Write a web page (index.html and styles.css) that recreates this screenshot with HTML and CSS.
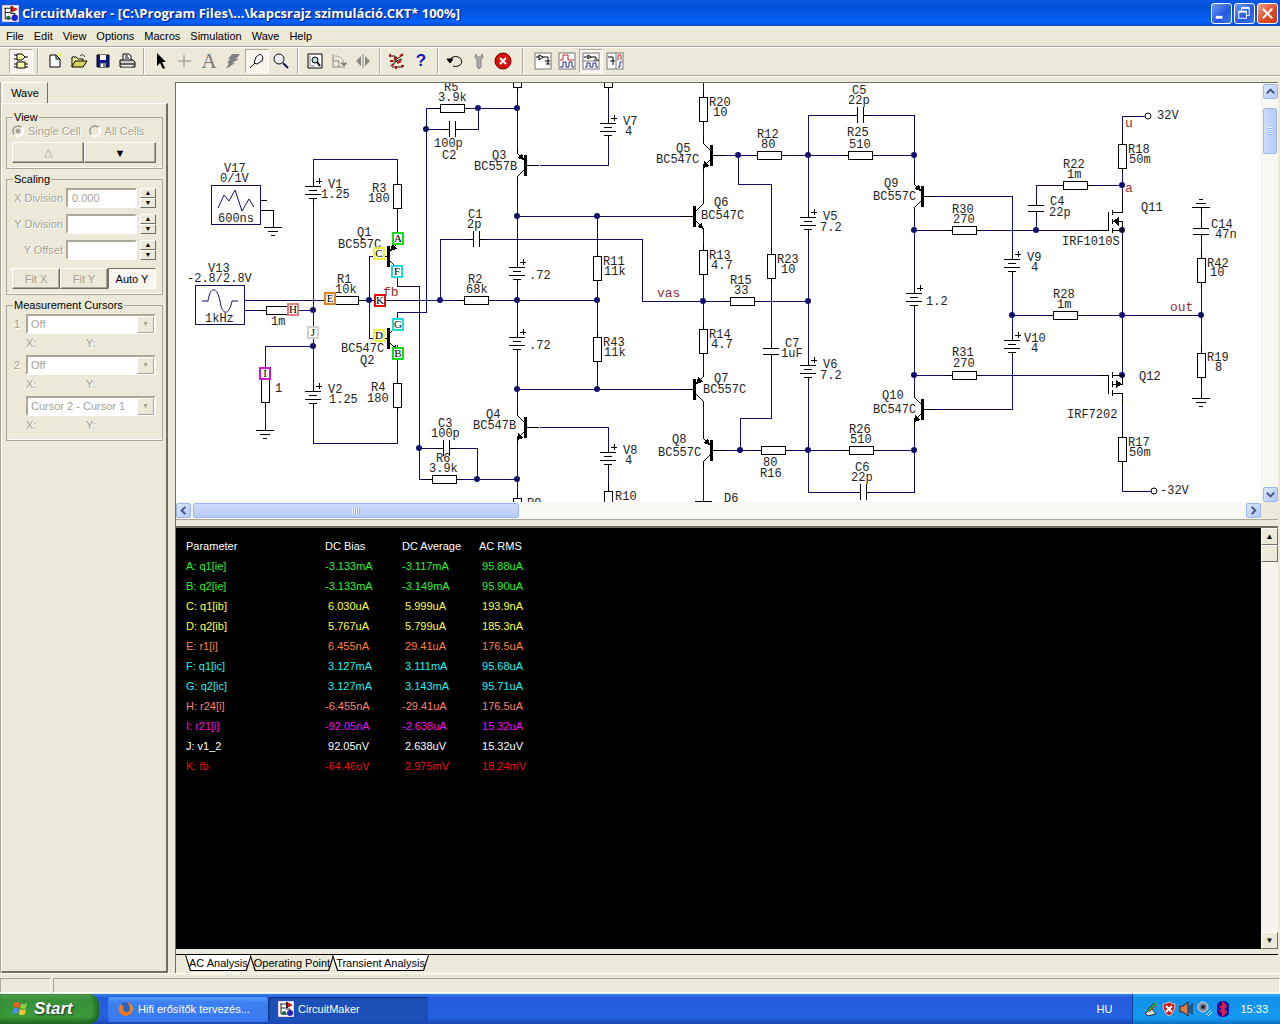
FILE: index.html
```html
<!DOCTYPE html>
<html lang="en">
<head>
  <meta charset="UTF-8" />
  <meta name="viewport" content="width=device-width, initial-scale=1.0" />
  <title>CircuitMaker</title>
  <link rel="stylesheet" href="styles.css">
</head>
<body>
  <svg class="defs" width="0" height="0" aria-hidden="true">
    <defs>
      <!-- schematic parts, all centred on 0,0 -->
      <g id="res-v"><path d="M0-18V18" /><rect x="-4" y="-12" width="8" height="24" /></g>
      <g id="res-h"><path d="M-18 0H18" /><rect x="-12" y="-4" width="24" height="8" /></g>
      <g id="cap-h"><path class="gap" d="M-3 0H3" /><path d="M-10 0H-3M3 0H10M-3-8V8M3-8V8" /></g>
      <g id="cap-v"><path class="gap" d="M0-3V3" /><path d="M0-9V-3M0 3V9M-8-3H8M-8 3H8" /></g>
      <g id="bat">
        <path class="gap" d="M0-6V6" />
        <path d="M0-11V-6M0 6V11M-8-6H8M-4-2H4M-8 2H8M-4 6H4" />
        <path d="M3-11H9M6-14V-8" />
      </g>
      <g id="gnd"><path d="M0-6V0M-9 0H9M-5 4H5M-2 8H2" /></g>
      <!-- column at x=0, base lead to the right -->
      <g id="pnp">
        <path d="M8 0H22M0-18V-12M0 18V12" />
        <path class="slant" d="M0-12L8-4M0 12L8 4" />
        <path class="solid" d="M7-5L0-7L5-12Z" /><rect class="solid" x="7" y="-10" width="3" height="21" />
      </g>
      <g id="npn">
        <path d="M8 0H22M0-18V-12M0 18V12" />
        <path class="slant" d="M0-12L8-4M0 12L8 4" />
        <path class="solid" d="M0 13L1 6L6 11Z" /><rect class="solid" x="7" y="-10" width="3" height="21" />
      </g>
      <g id="cm-logo">
        <rect width="16" height="16" fill="#fff" stroke="#d9a0c8" />
        <path d="M2 3H8M3 3V13H9M3 7H8" fill="none" stroke="#222" stroke-width="1" />
        <rect x="8" y="1" width="2" height="6" fill="#222" /><path d="M10 2L14 4L10 6Z" fill="#d11" stroke="#d11" />
        <circle cx="6" cy="12" r="2" fill="#186a30" /><circle cx="12" cy="12" r="3" fill="#22c" /><path d="M8 8H12V10" fill="none" stroke="#222" />
      </g>
    </defs>
  </svg>

  <header class="titlebar">
    <svg class="logo" viewBox="0 0 16 16"><use href="#cm-logo" /></svg>
    <h1>CircuitMaker - [C:\Program Files\...\kapcsrajz szimuláció.CKT* 100%]</h1>
    <button class="win-btn" aria-label="Minimize"><svg viewBox="0 0 20 20"><path d="M4 14H11" stroke="#fff" stroke-width="3" /></svg></button>
    <button class="win-btn" aria-label="Restore"><svg viewBox="0 0 20 20" fill="none" stroke="#fff"><path d="M7 7V4H15V12H12" stroke-width="1" /><path d="M7 4H15" stroke-width="2" /><rect x="4" y="8" width="8" height="7" /><path d="M4 8H12" stroke-width="2" /></svg></button>
    <button class="win-btn close" aria-label="Close"><svg viewBox="0 0 20 20"><path d="M5 5L15 15M15 5L5 15" stroke="#fff" stroke-width="2" /></svg></button>
  </header>

  <nav class="menubar">
    <a href="#">File</a>
    <a href="#">Edit</a>
    <a href="#">View</a>
    <a href="#">Options</a>
    <a href="#">Macros</a>
    <a href="#">Simulation</a>
    <a href="#">Wave</a>
    <a href="#">Help</a>
  </nav>

  <div class="toolbar">
    <button class="tool pressed" aria-label="Parts"><svg viewBox="0 0 18 18"><path d="M5 2H10L13 5L10 8H5ZM5 10H13V16H5Z" fill="#ffffb0" stroke="#000" /><path d="M2 3H5M2 7H5M13 5H16M2 12H5M2 15H5M13 12H16M13 15H16" stroke="#000" /></svg></button>
    <span class="sep"></span>
    <button class="tool" aria-label="New"><svg viewBox="0 0 18 18"><path d="M4 3H10L14 7V15H4ZM10 3V7H14" fill="#fff" stroke="#000" /><path d="M12 2L15 4M15 1V3" stroke="#ee0" /></svg></button>
    <button class="tool" aria-label="Open"><svg viewBox="0 0 18 18"><path d="M2 15V5H6L8 7H13V9" fill="#ffffa0" stroke="#000" /><path d="M2 15L5 9H17L13 15Z" fill="#d8d860" stroke="#000" /><path d="M10 4Q13 1 15 5" fill="none" stroke="#333" /></svg></button>
    <button class="tool" aria-label="Save"><svg viewBox="0 0 18 18"><path d="M3 3H15V15H3Z" fill="#0a1a8c" stroke="#000" /><rect x="6" y="3" width="6" height="5" fill="#fff" /><rect x="6" y="11" width="6" height="4" fill="#888" /><rect x="7" y="12" width="2" height="3" fill="#fff" /></svg></button>
    <button class="tool" aria-label="Print"><svg viewBox="0 0 18 18"><path d="M5 8V2H11L13 4V8" fill="#fff" stroke="#000" /><path d="M7 4H10M7 6H11" stroke="#000" /><path d="M2 8H15L17 10V15H2Z" fill="#ccc" stroke="#000" /><path d="M2 12H17" stroke="#000" /><path d="M4 14H14" stroke="#fff" /></svg></button>
    <span class="sep"></span>
    <button class="tool" aria-label="Arrow"><svg viewBox="0 0 18 18"><path d="M5 1V14L8 11L11 17L13 16L10 10H14Z" fill="#000" /></svg></button>
    <button class="tool" aria-label="Wire" disabled><svg viewBox="0 0 18 18"><path d="M2 9H15M8 3V15" stroke="#888" /></svg></button>
    <button class="tool letter" aria-label="Text" disabled>A</button>
    <button class="tool" aria-label="Delete" disabled><svg viewBox="0 0 18 18"><path d="M8 2H16L12 7H15L8 11H11L2 17L5 11H3L6 7H4Z" fill="#808080" /></svg></button>
    <button class="tool pressed" aria-label="Probe"><svg viewBox="0 0 18 18"><path d="M2 16L7 11M6 11L8 5L12 2L15 5L14 9L9 12Z" fill="#fff" stroke="#111" /></svg></button>
    <button class="tool" aria-label="Zoom"><svg viewBox="0 0 18 18"><circle cx="7" cy="7" r="5" fill="#eef" stroke="#111" /><path d="M11 11L16 16" stroke="#11117a" stroke-width="2" /></svg></button>
    <span class="sep"></span>
    <button class="tool" aria-label="Fit page"><svg viewBox="0 0 18 18"><path d="M2 2H16V16H2Z" fill="#fff" stroke="#000" stroke-width="1" /><circle cx="9" cy="8" r="3" fill="#bdd" stroke="#000" /><path d="M11 10L14 14" stroke="#000" stroke-width="2" /><path d="M4 4V14H9" fill="none" stroke="#888" /></svg></button>
    <button class="tool" aria-label="Rotate" disabled><svg viewBox="0 0 18 18" fill="none" stroke="#888"><path d="M3 2V15H15M3 9H9V15" /><path d="M5 4Q13 4 14 12" stroke-dasharray="2 1" /><path d="M11 11H17L14 14Z" fill="#888" /></svg></button>
    <button class="tool" aria-label="Mirror" disabled><svg viewBox="0 0 18 18"><path d="M7 4V14L2 9ZM11 4V14L16 9Z" fill="#888" /><path d="M9 2V16" stroke="#888" /></svg></button>
    <span class="sep"></span>
    <button class="tool" aria-label="Trace"><svg viewBox="0 0 18 18" fill="none"><path d="M3 4H7V8L15 3M3 9H8L14 7M4 13L9 9M4 15H15" stroke="#111" /><path d="M2 2V5M2 9H5M6 7L9 5M12 4L15 2M3 14L6 12M9 11L13 9M8 14V17M13 14H16" stroke="#c01010" stroke-width="2" /></svg></button>
    <button class="tool help" aria-label="Help">?</button>
    <span class="sep"></span>
    <button class="tool" aria-label="Reset"><svg viewBox="0 0 18 18" fill="none" stroke="#000"><path d="M4 8A6 5 0 1 1 7 14" /><path d="M1 7H7L4 11Z" fill="#000" /></svg></button>
    <button class="tool" aria-label="Step" disabled><svg viewBox="0 0 18 18"><path d="M6 2L5 5L7 8V15L9 17L11 15V8L13 5L12 2L11 5H7Z" fill="#aaa" stroke="#888" /></svg></button>
    <button class="tool" aria-label="Stop"><svg viewBox="0 0 18 18"><circle cx="9" cy="9" r="8" fill="#d81010" stroke="#700" /><path d="M6 6L12 12M12 6L6 12" stroke="#fff" stroke-width="2" /></svg></button>
    <span class="sep"></span>
    <button class="tool" aria-label="Schematic view"><svg viewBox="0 0 18 18" fill="none" stroke="#000"><rect x="1" y="1" width="16" height="16" fill="#fff" stroke="#777" /><path d="M2 5H5M5 3V8L9 5ZM9 5H14V12M11 9H16M12 12H16" /></svg></button>
    <button class="tool" aria-label="Wave view"><svg viewBox="0 0 18 18" fill="none"><rect x="1" y="1" width="16" height="16" fill="#fff" stroke="#777" /><path d="M2 8H5V3H10V8H16" stroke="#c22" /><path d="M2 15H5V10H8V15H11V10H14V15H16" stroke="#228" /></svg></button>
    <button class="tool pressed" aria-label="Split horizontally"><svg viewBox="0 0 18 18" fill="none"><rect x="1" y="1" width="16" height="16" fill="#fff" stroke="#777" /><path d="M2 5H6M6 3V7L9 5ZM9 5H14V7M12 8H17" stroke="#000" /><path d="M1 9H17" stroke="#777" /><path d="M3 15H5V11H8V15H11V11H14V15H16" stroke="#228" /></svg></button>
    <button class="tool" aria-label="Split vertically"><svg viewBox="0 0 18 18" fill="none"><rect x="1" y="1" width="16" height="16" fill="#fff" stroke="#777" /><path d="M10 1V17" stroke="#777" /><path d="M2 5H7V13M4 9H9" stroke="#000" /><path d="M11 8H12V3H15V8" stroke="#c22" /><path d="M12 15H14V10H16" stroke="#228" /></svg></button>
  </div>

  <main class="workspace">
    <aside class="sidebar">
      <button class="side-tab">Wave</button>
      <div class="side-panel">
        <fieldset>
          <legend>View</legend>
          <div class="radios">
            <label><input type="radio" name="cells" checked disabled>Single Cell</label>
            <label><input type="radio" name="cells" disabled>All Cells</label>
          </div>
          <div class="btn-row">
            <button class="btn" disabled>△</button>
            <button class="btn">▼</button>
          </div>
        </fieldset>

        <fieldset class="scaling">
          <legend>Scaling</legend>
          <div class="field">
            <label for="xdiv">X Division</label>
            <input id="xdiv" type="text" value="0.000" disabled>
            <span class="spin"><button aria-label="X up">▲</button><button aria-label="X down">▼</button></span>
          </div>
          <div class="field">
            <label for="ydiv">Y Division</label>
            <input id="ydiv" type="text" disabled>
            <span class="spin"><button aria-label="Y up">▲</button><button aria-label="Y down">▼</button></span>
          </div>
          <div class="field">
            <label for="yoff">Y Offset</label>
            <input id="yoff" type="text" disabled>
            <span class="spin"><button aria-label="Offset up">▲</button><button aria-label="Offset down">▼</button></span>
          </div>
          <div class="btn-row">
            <button class="btn" disabled>Fit X</button>
            <button class="btn" disabled>Fit Y</button>
            <button class="btn on">Auto Y</button>
          </div>
        </fieldset>

        <fieldset class="cursors">
          <legend>Measurement Cursors</legend>
          <div class="cursor">
            <label for="cur1">1</label>
            <span class="select"><select id="cur1" disabled><option>Off</option></select></span>
          </div>
          <div class="xy"><span>X:</span><span>Y:</span></div>
          <div class="cursor">
            <label for="cur2">2</label>
            <span class="select"><select id="cur2" disabled><option>Off</option></select></span>
          </div>
          <div class="xy"><span>X:</span><span>Y:</span></div>
          <div class="cursor">
            <label for="cur3"></label>
            <span class="select"><select id="cur3" aria-label="Cursor difference" disabled><option>Cursor 2 - Cursor 1</option></select></span>
          </div>
          <div class="xy"><span>X:</span><span>Y:</span></div>
        </fieldset>
      </div>
    </aside>

    <section class="views">
      <div class="schematic">
        <svg class="circuit" role="img" aria-label="Amplifier schematic">
          <g transform="translate(-176 -83)">
            <!-- wires -->
            <path class="wire" d="M426 108H517M426 129H478V108M426 108V312H397V322
              M517 83V153M608 83V165H540M440 300V239H642V301H808
              M517 177V415M517 439V500M517 216H690M597 216V389M517 389H690
              M245 300H597M369 256V338M369 256H388M369 338H388M245 310H313
              M313 443V159H397V245M313 443H397V345M313 346H265V426
              M397 268V286H419V479H517M419 448H477V479
              M540 427H608V495
              M703 83V143M703 167V204M703 228V377M703 401V438M703 462V501
              M725 155H914M738 155V184H771V418H740V450M725 450H914
              M808 115V492H914V115H808
              M930 196H1012V409H930M914 230H1108M1036 230V185H1122
              M914 375H1108M1145 116H1122V212M1122 230V375M1122 393V491H1151
              M1012 315H1201M1201 207V398" />
            <path class="gap" d="M914 184V208M914 397V421" />
            <!-- junctions -->
            <g class="dots">
              <circle cx="478" cy="108" r="3" /><circle cx="517" cy="108" r="3" /><circle cx="426" cy="129" r="3" />
              <circle cx="517" cy="216" r="3" /><circle cx="597" cy="216" r="3" /><circle cx="517" cy="300" r="3" />
              <circle cx="597" cy="300" r="3" /><circle cx="517" cy="389" r="3" /><circle cx="597" cy="389" r="3" />
              <circle cx="440" cy="300" r="3" /><circle cx="369" cy="300" r="3" /><circle cx="313" cy="310" r="3" />
              <circle cx="313" cy="346" r="3" /><circle cx="419" cy="448" r="3" /><circle cx="477" cy="479" r="3" />
              <circle cx="517" cy="479" r="3" /><circle cx="703" cy="301" r="3" /><circle cx="808" cy="301" r="3" />
              <circle cx="738" cy="155" r="3" /><circle cx="808" cy="155" r="3" /><circle cx="914" cy="155" r="3" />
              <circle cx="740" cy="450" r="3" /><circle cx="808" cy="450" r="3" /><circle cx="914" cy="450" r="3" />
              <circle cx="914" cy="230" r="3" /><circle cx="914" cy="375" r="3" /><circle cx="1036" cy="230" r="3" />
              <circle cx="1012" cy="315" r="3" /><circle cx="1122" cy="315" r="3" /><circle cx="1201" cy="315" r="3" />
              <circle cx="1122" cy="185" r="3" /><circle cx="1122" cy="230" r="3" /><circle cx="1122" cy="375" r="3" />
            </g>
            <g class="part">
              <!-- resistors -->
              <use href="#res-h" x="452" y="108" /><use href="#res-v" x="397" y="196" /><use href="#res-v" x="397" y="395" />
              <use href="#res-h" x="346" y="300" /><use href="#res-h" x="278" y="310" /><use href="#res-v" x="265" y="390" />
              <use href="#res-h" x="476" y="300" /><use href="#res-h" x="444" y="479" /><use href="#res-v" x="597" y="268" />
              <use href="#res-v" x="597" y="349" /><use href="#res-v" x="517" y="75" /><use href="#res-v" x="608" y="75" />
              <use href="#res-v" x="517" y="510" /><use href="#res-v" x="608" y="503" />
              <use href="#res-v" x="703" y="109" /><use href="#res-v" x="703" y="262" /><use href="#res-v" x="703" y="341" />
              <use href="#res-h" x="742" y="301" /><use href="#res-h" x="769" y="155" /><use href="#res-h" x="860" y="155" />
              <use href="#res-v" x="771" y="266" /><use href="#res-h" x="773" y="450" /><use href="#res-h" x="861" y="450" />
              <use href="#res-h" x="964" y="230" /><use href="#res-h" x="964" y="375" /><use href="#res-h" x="1075" y="185" />
              <use href="#res-h" x="1065" y="315" /><use href="#res-v" x="1122" y="156" /><use href="#res-v" x="1122" y="449" />
              <use href="#res-v" x="1201" y="270" /><use href="#res-v" x="1201" y="365" />
              <!-- capacitors -->
              <use href="#cap-h" x="452" y="129" /><use href="#cap-h" x="476" y="239" /><use href="#cap-h" x="446" y="448" />
              <use href="#cap-h" x="860" y="115" /><use href="#cap-h" x="863" y="492" /><use href="#cap-v" x="771" y="351" />
              <use href="#cap-v" x="1036" y="208" /><use href="#cap-v" x="1201" y="231" />
              <!-- voltage sources -->
              <use href="#bat" x="313" y="192" /><use href="#bat" x="313" y="397" /><use href="#bat" x="608" y="129" />
              <use href="#bat" x="608" y="458" /><use href="#bat" x="517" y="273" /><use href="#bat" x="517" y="343" />
              <use href="#bat" x="808" y="223" /><use href="#bat" x="808" y="371" /><use href="#bat" x="914" y="299" />
              <use href="#bat" x="1012" y="265" /><use href="#bat" x="1012" y="346" />
              <!-- grounds -->
              <use href="#gnd" x="273" y="227" /><use href="#gnd" x="265" y="430" /><use href="#gnd" x="1201" y="398" />
              <use href="#gnd" transform="translate(1201 207) scale(1 -1)" />
              <!-- bipolar transistors -->
              <use href="#pnp" transform="translate(397 256) scale(-1 1)" /><use href="#npn" transform="translate(397 338) scale(-1 1)" />
              <use href="#pnp" x="517" y="165" /><use href="#npn" x="517" y="427" />
              <use href="#npn" x="703" y="155" /><use href="#npn" transform="translate(703 216) scale(-1 1)" />
              <use href="#pnp" transform="translate(703 389) scale(-1 1)" /><use href="#pnp" x="703" y="450" />
              <use href="#pnp" x="914" y="196" /><use href="#npn" x="914" y="409" />
              <path d="M695 501H712" />
              <!-- mosfets -->
              <path d="M1090 230H1108V212M1112 210V215M1112 219V224M1112 228V233M1112 212H1122V200M1112 221H1122V240M1112 230H1122" />
              <path class="solid" d="M1113 221L1119 217V226Z" />
              <path d="M1098 375H1108V394M1112 372V378M1112 381V387M1112 390V396M1112 375H1122V384H1112M1112 393H1122V405" />
              <path class="solid" d="M1122 384L1116 380V388Z" />
              <circle class="pin" cx="1148" cy="116" r="3" /><circle class="pin" cx="1154" cy="491" r="3" />
              <path d="M261 200H267M261 210H273V222" />
            </g>
            <!-- signal generators -->
            <g class="source">
              <rect x="211" y="185" width="49" height="39" /><rect x="195" y="285" width="49" height="39" />
              <path class="slant" d="M218 208L224 195L229 201L235 190L242 211L249 199L254 207" />
              <path class="slant" d="M202 301H208C210 286 217 286 220 301C222 316 229 316 232 301H238" />
            </g>
            <!-- part labels -->
            <g class="labels">
              <text x="224" y="172">V17</text><text x="220" y="182">0/1V</text><text x="218" y="222">600ns</text>
              <text x="208" y="272">V13</text><text x="187" y="282">-2.8/2.8V</text><text x="205" y="322">1kHz</text>
              <text x="328" y="188">V1</text><text x="321" y="198">1.25</text><text x="372" y="192">R3</text><text x="368" y="202">180</text>
              <text x="357" y="236">Q1</text><text x="338" y="248">BC557C</text><text x="337" y="283">R1</text><text x="335" y="293">10k</text>
              <text x="271" y="325">1m</text><text x="341" y="352">BC547C</text><text x="360" y="364">Q2</text><text x="275" y="392">1</text>
              <text x="328" y="393">V2</text><text x="329" y="403">1.25</text><text x="371" y="391">R4</text><text x="367" y="402">180</text>
              <text x="438" y="427">C3</text><text x="431" y="437">100p</text><text x="436" y="462">R6</text><text x="429" y="472">3.9k</text>
              <text x="444" y="91">R5</text><text x="438" y="101">3.9k</text><text x="434" y="147">100p</text><text x="442" y="159">C2</text>
              <text x="492" y="159">Q3</text><text x="474" y="170">BC557B</text><text x="623" y="125">V7</text><text x="625" y="135">4</text>
              <text x="468" y="218">C1</text><text x="467" y="228">2p</text><text x="603" y="265">R11</text><text x="604" y="275">11k</text>
              <text x="529" y="279">.72</text><text x="468" y="283">R2</text><text x="466" y="293">68k</text><text x="529" y="349">.72</text>
              <text x="603" y="346">R43</text><text x="604" y="356">11k</text><text x="486" y="418">Q4</text><text x="473" y="429">BC547B</text>
              <text x="623" y="454">V8</text><text x="625" y="464">4</text><text x="615" y="500">R10</text><text x="527" y="507">R9</text>
              <text x="709" y="106">R20</text><text x="713" y="116">10</text><text x="757" y="138">R12</text><text x="761" y="148">80</text>
              <text x="852" y="94">C5</text><text x="848" y="104">22p</text><text x="847" y="136">R25</text><text x="849" y="148">510</text>
              <text x="676" y="152">Q5</text><text x="656" y="163">BC547C</text><text x="714" y="206">Q6</text><text x="701" y="219">BC547C</text>
              <text x="823" y="220">V5</text><text x="820" y="231">7.2</text><text x="709" y="259">R13</text><text x="711" y="269">4.7</text>
              <text x="777" y="263">R23</text><text x="781" y="273">10</text><text x="730" y="284">R15</text><text x="734" y="294">33</text>
              <text x="884" y="187">Q9</text><text x="873" y="200">BC557C</text><text x="926" y="305">1.2</text>
              <text x="709" y="338">R14</text><text x="711" y="348">4.7</text><text x="785" y="347">C7</text><text x="781" y="357">1uF</text>
              <text x="823" y="368">V6</text><text x="820" y="379">7.2</text><text x="714" y="382">Q7</text><text x="703" y="393">BC557C</text>
              <text x="672" y="443">Q8</text><text x="658" y="456">BC557C</text><text x="763" y="466">80</text><text x="760" y="477">R16</text>
              <text x="849" y="433">R26</text><text x="850" y="443">510</text><text x="855" y="471">C6</text><text x="851" y="481">22p</text>
              <text x="724" y="502">D6</text><text x="882" y="399">Q10</text><text x="873" y="413">BC547C</text>
              <text x="1157" y="119">32V</text><text x="1128" y="153">R18</text><text x="1129" y="163">50m</text>
              <text x="1063" y="168">R22</text><text x="1067" y="178">1m</text><text x="1050" y="205">C4</text><text x="1049" y="216">22p</text>
              <text x="1141" y="211">Q11</text><text x="952" y="213">R30</text><text x="953" y="223">270</text><text x="1062" y="245">IRF1010S</text>
              <text x="1027" y="261">V9</text><text x="1031" y="271">4</text><text x="1211" y="228">C14</text><text x="1215" y="238">47n</text>
              <text x="1207" y="267">R42</text><text x="1210" y="276">10</text><text x="1053" y="298">R28</text><text x="1057" y="308">1m</text>
              <text x="1024" y="342">V10</text><text x="1031" y="352">4</text><text x="952" y="356">R31</text><text x="953" y="367">270</text>
              <text x="1139" y="380">Q12</text><text x="1067" y="418">IRF7202</text><text x="1207" y="361">R19</text><text x="1215" y="371">8</text>
              <text x="1128" y="446">R17</text><text x="1129" y="456">50m</text><text x="1160" y="494">-32V</text>
            </g>
            <g class="nets">
              <text x="383" y="296">fb</text><text x="657" y="297">vas</text><text x="1125" y="127">u</text>
              <text x="1125" y="192">a</text><text x="1170" y="311">out</text>
            </g>
            <!-- probes -->
            <g class="probes">
              <g stroke="#18d818"><rect x="393" y="233" width="10" height="11" /><text x="398" y="242">A</text></g>
              <g stroke="#18d818"><rect x="393" y="348" width="10" height="11" /><text x="398" y="357">B</text></g>
              <g stroke="#f0f040"><rect x="374" y="248" width="10" height="11" /><text x="379" y="257">C</text></g>
              <g stroke="#f0f040"><rect x="374" y="330" width="10" height="11" /><text x="379" y="339">D</text></g>
              <g stroke="#e08018"><rect x="325" y="293" width="10" height="11" /><text x="330" y="302">E</text></g>
              <g stroke="#20d8d8"><rect x="392" y="266" width="10" height="11" /><text x="397" y="275">F</text></g>
              <g stroke="#20d8d8"><rect x="393" y="319" width="10" height="11" /><text x="398" y="328">G</text></g>
              <g stroke="#e08080"><rect x="288" y="304" width="10" height="11" /><text x="293" y="313">H</text></g>
              <g stroke="#d018d0"><rect x="260" y="368" width="10" height="11" /><text x="265" y="377">I</text></g>
              <g stroke="#d0d0d0"><rect x="308" y="327" width="10" height="11" /><text x="313" y="336">J</text></g>
              <g stroke="#e01010"><rect x="375" y="295" width="10" height="11" /><text x="380" y="304">K</text></g>
            </g>
          </g>
        </svg>
        <div class="vscroll">
          <button class="sb" aria-label="Scroll up"><svg viewBox="0 0 14 14"><path d="M3 9L7 5L11 9" /></svg></button>
          <div class="thumb v"></div>
          <button class="sb" aria-label="Scroll down"><svg viewBox="0 0 14 14"><path d="M3 5L7 9L11 5" /></svg></button>
        </div>
        <div class="hscroll">
          <button class="sb" aria-label="Scroll left"><svg viewBox="0 0 14 14"><path d="M9 3L5 7L9 11" /></svg></button>
          <div class="thumb h"></div>
          <button class="sb" aria-label="Scroll right"><svg viewBox="0 0 14 14"><path d="M5 3L9 7L5 11" /></svg></button>
        </div>
      </div>

      <div class="splitter"></div>

      <div class="results">
        <div class="readout">
          <table>
            <thead>
              <tr><th>Parameter</th><th>DC Bias</th><th>DC Average</th><th>AC RMS</th></tr>
            </thead>
            <tbody>
              <tr class="green"><td>A: q1[ie]</td><td>-3.133mA</td><td>-3.117mA</td><td>&nbsp;95.88uA</td></tr>
              <tr class="green"><td>B: q2[ie]</td><td>-3.133mA</td><td>-3.149mA</td><td>&nbsp;95.90uA</td></tr>
              <tr class="yellow"><td>C: q1[ib]</td><td>&nbsp;6.030uA</td><td>&nbsp;5.999uA</td><td>&nbsp;193.9nA</td></tr>
              <tr class="yellow"><td>D: q2[ib]</td><td>&nbsp;5.767uA</td><td>&nbsp;5.799uA</td><td>&nbsp;185.3nA</td></tr>
              <tr class="orange"><td>E: r1[i]</td><td>&nbsp;6.455nA</td><td>&nbsp;29.41uA</td><td>&nbsp;176.5uA</td></tr>
              <tr class="cyan"><td>F: q1[ic]</td><td>&nbsp;3.127mA</td><td>&nbsp;3.111mA</td><td>&nbsp;95.68uA</td></tr>
              <tr class="cyan"><td>G: q2[ic]</td><td>&nbsp;3.127mA</td><td>&nbsp;3.143mA</td><td>&nbsp;95.71uA</td></tr>
              <tr class="salmon"><td>H: r24[i]</td><td>-6.455nA</td><td>-29.41uA</td><td>&nbsp;176.5uA</td></tr>
              <tr class="magenta"><td>I: r21[i]</td><td>-92.05nA</td><td>-2.638uA</td><td>&nbsp;15.32uA</td></tr>
              <tr class="white"><td>J: v1_2</td><td>&nbsp;92.05nV</td><td>&nbsp;2.638uV</td><td>&nbsp;15.32uV</td></tr>
              <tr class="red"><td>K: fb</td><td>-64.46uV</td><td>&nbsp;2.975mV</td><td>&nbsp;18.24mV</td></tr>
            </tbody>
          </table>
          <div class="classic-scroll">
            <button class="cb" aria-label="Up">▲</button>
            <div class="cb grip"></div>
            <button class="cb last" aria-label="Down">▼</button>
          </div>
        </div>
        <div class="analysis-tabs">
          <button>AC Analysis</button>
          <button class="active">Operating Point</button>
          <button>Transient Analysis</button>
        </div>
      </div>
    </section>
  </main>

  <div class="statusbar"><span></span><span></span></div>

  <footer class="taskbar">
    <button class="start">
      <svg viewBox="0 0 20 20"><path d="M4 4Q7 2 10 4L9 9Q6 7 3 9Z" fill="#f05a22" /><path d="M11 5Q14 6 17 4L16 9Q13 11 10 9Z" fill="#8ccf3c" /><path d="M3 10Q6 8 9 10L8 15Q5 13 2 15Z" fill="#4a8cf5" /><path d="M10 10Q13 12 16 10L15 15Q12 17 9 15Z" fill="#fcc82a" /></svg>
      Start
    </button>
    <button class="task">
      <svg viewBox="0 0 16 16"><circle cx="8" cy="8" r="7" fill="#2a60c8" /><path d="M9 1A7 7 0 1 1 1 6Q2 4 3 3Q4 5 6 5Q4 8 7 11Q11 12 12 8Q12 4 9 1Z" fill="#f07818" /><path d="M13 4Q16 8 13 12Q15 6 11 3Z" fill="#fcc030" /></svg>
      Hifi erősítők tervezés...
    </button>
    <button class="task current">
      <svg viewBox="0 0 16 16"><use href="#cm-logo" /></svg>
      CircuitMaker
    </button>
    <span class="lang">HU</span>
    <div class="tray">
      <svg viewBox="0 0 16 16"><path d="M2 12L9 8L13 13L5 15Z" fill="#ddd" stroke="#222" /><path d="M5 10L13 2" stroke="#22a822" stroke-width="3" /><path d="M6 11L13 4" stroke="#d22" /><path d="M4 9L11 2" stroke="#228" /></svg>
      <svg viewBox="0 0 16 16"><path d="M8 1Q11 3 14 3Q14 12 8 15Q2 12 2 3Q5 3 8 1Z" fill="#d01818" stroke="#e8c0c0" /><path d="M5 5L11 11M11 5L5 11" stroke="#fff" stroke-width="2" /></svg>
      <svg viewBox="0 0 16 16"><path d="M1 5H4L9 1V15L4 11H1Z" fill="#e07840" stroke="#222" /><path d="M11 4V12M13 2V14" stroke="#222" stroke-width="1" /></svg>
      <svg viewBox="0 0 16 16"><circle cx="6" cy="6" r="5" fill="#889" stroke="#cde" /><circle cx="6" cy="6" r="2" fill="#223" /><path d="M9 14L14 9M11 15L15 11" stroke="#cde" /></svg>
      <svg viewBox="0 0 16 16"><rect x="2" y="0" width="12" height="16" rx="5" fill="#1010b0" /><path d="M5 5L11 11L8 14V2L11 5L5 11" fill="none" stroke="#e02040" stroke-width="2" /></svg>
      <time>15:33</time>
    </div>
  </footer>
</body>
</html>
```
FILE: styles.css
```css
:root {
  --face: #ece9d8;
  --shade: #aca899;
  --dark: #716f64;
  --disabled: #a5a294;
  --wire: #10106c;
}
* { box-sizing: border-box; margin: 0; padding: 0; }
body {
  height: 100vh;
  display: flex;
  flex-direction: column;
  overflow: hidden;
  background: var(--face);
  font-family: 'Liberation Sans', Arial, sans-serif;
  font-size: 11px;
  color: #000;
}
button, input, select { font: inherit; color: inherit; }
.defs { position: absolute; }

/* title bar */
.titlebar {
  flex: none;
  height: 26px;
  display: flex;
  align-items: center;
  gap: 2px;
  padding: 0 2px;
  background: linear-gradient(#0a58e8, #0450d8 20%, #0458ea 60%, #0462fa 85%, #0346c4);
  color: #fff;
}
.logo { width: 17px; height: 17px; }
.titlebar h1 {
  flex: 1;
  margin-left: 1px;
  font: 700 13px 'Open Sans', sans-serif;
  white-space: nowrap;
  text-shadow: 1px 1px 1px #0a1883;
}
.win-btn {
  width: 21px;
  height: 21px;
  border: 1px solid #fff;
  border-radius: 3px;
  background: linear-gradient(135deg, #6c96f4, #2458dc 60%, #3c78f0);
}
.win-btn svg { display: block; width: 19px; height: 19px; }
.win-btn.close { background: linear-gradient(135deg, #f0a088, #dc4820 60%, #c83c10); }

/* menu and toolbar */
.menubar {
  flex: none;
  height: 20px;
  display: flex;
  align-items: center;
  gap: 10px;
  padding: 0 6px;
}
.menubar a { color: #000; text-decoration: none; }
.toolbar {
  flex: none;
  height: 30px;
  display: flex;
  align-items: center;
  padding: 0 9px;
  border-top: 1px solid var(--shade);
  border-bottom: 1px solid var(--shade);
  box-shadow: inset 0 1px #fff, 0 1px #fff;
}
.tool {
  width: 24px;
  height: 24px;
  border: 1px solid transparent;
  background: none;
}
.tool svg { display: block; width: 18px; height: 18px; margin: auto; }
.tool.pressed {
  background: #f7f5ee;
  border-color: var(--shade) #fff #fff var(--shade);
}
.tool.letter { font: 21px 'Liberation Serif', serif; line-height: 20px; color: #777; }
.tool.help { font-size: 17px; font-weight: bold; line-height: 20px; color: #1414b4; }
.sep {
  width: 2px;
  height: 26px;
  margin: 0 4px;
  border-left: 1px solid var(--shade);
  border-right: 1px solid #fff;
}
.sep:last-of-type { margin: 0 7px; }

/* workspace */
.workspace {
  flex: 1;
  min-height: 0;
  display: flex;
  margin-top: 6px;
}
.sidebar {
  width: 168px;
  flex: none;
  display: flex;
  flex-direction: column;
  border-left: 1px solid var(--shade);
}
.side-tab {
  width: 46px;
  height: 21px;
  margin-left: 1px;
  border: 1px solid #fff;
  border-right-color: var(--dark);
  border-bottom: 0;
  background: var(--face);
}
.side-panel {
  flex: 1;
  padding: 6px 3px 0 4px;
  border-top: 1px solid #fff;
  border-left: 1px solid #fff;
  border-right: 2px solid var(--dark);
  border-bottom: 2px solid var(--dark);
}
fieldset {
  padding: 0 6px 5px 5px;
  margin-bottom: 3px;
  border: 1px solid var(--shade);
  box-shadow: inset 0 -1px #fff;
}
legend {
  height: 14px;
  line-height: 14px;
  margin-left: 1px;
  padding: 0 1px;
}
.radios {
  display: flex;
  gap: 8px;
  margin-bottom: 4px;
  white-space: nowrap;
}
.radios label { display: flex; align-items: center; gap: 4px; height: 14px; }
.radios input {
  appearance: none;
  width: 12px;
  height: 12px;
  border: 2px solid;
  border-color: var(--shade) #fff #fff var(--shade);
  border-radius: 50%;
}
.radios input:checked { background: radial-gradient(circle, var(--shade) 2px, transparent 3px); }
.radios label, .field label, .cursor label, .xy { color: var(--disabled); text-shadow: 1px 1px #fff; }
.btn-row { display: flex; }
.btn {
  flex: 1;
  height: 21px;
  border: 1px solid;
  border-color: #fff var(--dark) var(--dark) #fff;
  box-shadow: inset -1px -1px var(--shade);
  background: var(--face);
  white-space: nowrap;
}
.btn:disabled { color: var(--disabled); }
.btn.on {
  background: #f7f5ee;
  border-color: var(--dark) #fff #fff var(--dark);
  box-shadow: none;
}
.field {
  display: flex;
  align-items: center;
  gap: 3px;
  height: 20px;
  margin-bottom: 6px;
}
.field label { flex: 1; text-align: right; white-space: nowrap; }
.field input {
  width: 71px;
  height: 20px;
  padding: 0 4px;
  border: 2px solid;
  border-color: var(--shade) #fff #fff var(--shade);
  background: #fff;
  color: var(--disabled);
}
.scaling legend { margin-bottom: 2px; }
.scaling .btn-row { padding-top: 2px; }
.spin { display: flex; flex-direction: column; width: 16px; }
.spin button {
  height: 10px;
  border: 1px solid;
  border-color: #fff var(--dark) var(--dark) #fff;
  background: var(--face);
  font-size: 7px;
  line-height: 8px;
}
.cursors { padding-bottom: 3px; }
.cursors legend { margin-bottom: 2px; }
.cursor { display: flex; align-items: center; }
.cursor label { width: 14px; padding-left: 2px; }
.select { position: relative; flex: 1; display: flex; }
.select::after {
  content: "▼";
  position: absolute;
  top: 2px;
  right: 2px;
  width: 15px;
  height: 15px;
  border: 1px solid;
  border-color: #fff var(--shade) var(--shade) #fff;
  background: var(--face);
  color: var(--disabled);
  font-size: 7px;
  line-height: 13px;
  text-align: center;
}
.cursor select {
  appearance: none;
  width: 100%;
  height: 20px;
  padding: 0 3px;
  border: 2px solid;
  border-color: var(--shade) #fff #fff var(--shade);
  border-radius: 0;
  background: #fff;
  color: var(--disabled);
  opacity: 1;
}
.xy { display: flex; height: 21px; line-height: 19px; padding-left: 14px; }
.xy span { width: 60px; }

/* right side views */
.views {
  flex: 1;
  min-width: 0;
  margin-left: 7px;
  margin-right: 2px;
  display: grid;
  grid-template-rows: minmax(0, 437fr) 9px minmax(0, 445fr);
  border-left: 1px solid var(--dark);
}
.schematic {
  display: grid;
  grid-template-columns: minmax(0, 1fr) 17px;
  grid-template-rows: minmax(0, 1fr) 17px;
  border-top: 1px solid var(--dark);
}
.circuit { width: 100%; height: 100%; background: #fff; overflow: hidden; }
.wire { fill: none; stroke: var(--wire); shape-rendering: crispEdges; }
.dots { fill: var(--wire); }
.part, .source, #res-v, #res-h { shape-rendering: crispEdges; }
.part { fill: none; stroke: #000; }
.part .pin, #res-v rect, #res-h rect { fill: #fff; }
.part .pin { shape-rendering: auto; }
.gap { stroke: #fff; stroke-width: 1; shape-rendering: crispEdges; }
.slant { fill: none; shape-rendering: auto; }
.solid { fill: #000; stroke: none; }
.source { fill: none; stroke: var(--wire); }
.labels { font: 12px 'Liberation Mono', monospace; fill: #222; }
.nets { font: 13px 'Liberation Mono', monospace; fill: #983030; }
.probes rect { fill: #fff; stroke-width: 2; }
.probes text {
  font: 11px 'Liberation Serif', serif;
  fill: #000;
  stroke: none;
  text-anchor: middle;
}
.vscroll, .hscroll { display: flex; background: #f8f8f2; }
.vscroll { flex-direction: column; padding: 1px 1px 0; border-left: 1px solid #f0efe4; }
.hscroll { padding: 1px 0; }
.sb {
  flex: none;
  width: 15px;
  height: 15px;
  border: 1px solid #9db5ee;
  border-radius: 2px;
  background: linear-gradient(135deg, #dce6fe, #b4c8f6);
}
.sb:last-child { margin-left: auto; }
.vscroll .sb:last-child { margin-left: 0; margin-top: auto; }
.sb svg { display: block; width: 13px; height: 13px; fill: none; stroke: #3c5488; stroke-width: 2; }
.thumb {
  border: 1px solid #9db5ee;
  border-radius: 2px;
  background: linear-gradient(90deg, #cddbfc, #b8ccf8);
}
.thumb::before { content: ""; display: block; background: repeating-linear-gradient(#eef4fe 0 1px, #8cb0f8 1px 2px); }
.thumb.v { height: 46px; margin-top: 9px; padding: 18px 4px; }
.thumb.v::before { height: 8px; }
.thumb.h {
  width: 30%;
  margin-left: 2px;
  display: flex;
  align-items: center;
  justify-content: center;
  background: linear-gradient(#cddbfc, #b8ccf8);
}
.thumb.h::before { width: 8px; height: 6px; background: repeating-linear-gradient(90deg, #eef4fe 0 1px, #8cb0f8 1px 2px); }
.splitter { border-top: 1px solid var(--shade); border-bottom: 2px solid var(--dark); background: var(--face); }

/* operating point readout */
.results { display: flex; flex-direction: column; min-height: 0; }
.readout {
  flex: 1;
  min-height: 0;
  display: flex;
  justify-content: space-between;
  background: #000;
}
table {
  align-self: flex-start;
  margin: 8px 0 0 10px;
  border-collapse: collapse;
  table-layout: fixed;
  width: 370px;
}
th, td { height: 20px; text-align: left; font-weight: normal; white-space: nowrap; }
th { color: #fff; width: 77px; }
th:first-child { width: 139px; }
.green { color: #30f030; }
.yellow { color: #ffff40; }
.orange { color: #ff8040; }
.cyan { color: #20f0f0; }
.salmon { color: #ff8070; }
.magenta { color: #f010f0; }
.white { color: #fff; }
.red { color: #f01010; }
.classic-scroll { width: 17px; display: flex; flex-direction: column; background: #f6f4ec; }
.cb {
  height: 17px;
  border: 1px solid;
  border-color: #fff var(--dark) var(--dark) #fff;
  background: var(--face);
  font-size: 8px;
  line-height: 14px;
}
.cb.last { margin-top: auto; }
.analysis-tabs {
  flex: none;
  height: 24px;
  display: flex;
  padding: 6px 0 0 9px;
  background: linear-gradient(var(--face) 5px, #000 5px 6px, var(--face) 6px);
}
.analysis-tabs button {
  height: 16px;
  padding: 0 4px;
  border: 0;
  background: #000;
  clip-path: polygon(0 0, 100% 0, calc(100% - 5px) 100%, 5px 100%);
  position: relative;
  z-index: 0;
  margin-right: -2px;
  line-height: 14px;
}
.analysis-tabs button::before {
  content: "";
  position: absolute;
  inset: 0 0 1px;
  z-index: -1;
  background: #fff;
  clip-path: polygon(1px 0, calc(100% - 1px) 0, calc(100% - 6px) 100%, 6px 100%);
}
.analysis-tabs .active::before { background: var(--face); }

/* status bar */
.statusbar {
  flex: none;
  height: 21px;
  display: flex;
  gap: 2px;
  padding: 4px 0 1px;
  border-top: 1px solid #fff;
}
.statusbar span { width: 51px; border: 1px solid; border-color: var(--shade) #fff #fff var(--shade); }
.statusbar span:last-child { flex: 1; }

/* taskbar */
.taskbar {
  flex: none;
  height: 30px;
  display: flex;
  align-items: center;
  background: linear-gradient(#3a80f0, #245cdc 12%, #2460e0 80%, #1a46b0);
  color: #fff;
}
.start {
  width: 99px;
  height: 30px;
  display: flex;
  align-items: center;
  gap: 4px;
  padding-left: 10px;
  margin-right: 9px;
  border: 0;
  border-radius: 0 10px 10px 0;
  background: linear-gradient(#58a858, #389038 20%, #3a9a3a 75%, #287028);
  box-shadow: inset -3px -1px 5px #1c601c;
  font: italic bold 17px 'Liberation Sans', sans-serif;
  text-shadow: 1px 1px 2px #222;
}
.start svg { width: 20px; height: 20px; }
.task {
  width: 160px;
  height: 25px;
  display: flex;
  align-items: center;
  gap: 4px;
  padding: 0 10px;
  border: 0;
  border-radius: 3px;
  background: linear-gradient(#5c9cfc, #3c80f4 20%, #3878ec);
  white-space: nowrap;
}
.task.current { background: #1c50b8; box-shadow: inset 1px 1px 2px #0c2c78; }
.task svg { width: 16px; height: 16px; flex: none; }
.lang { margin-left: auto; margin-right: 20px; }
.tray {
  height: 30px;
  display: flex;
  align-items: center;
  gap: 2px;
  padding: 0 12px 0 10px;
  border-left: 1px solid #0c4498;
  background: linear-gradient(#30b0f8, #1290e8 15%, #149af0 80%, #0c70c0);
}
.tray svg { width: 16px; height: 16px; }
.tray time { margin-left: 7px; }
```
